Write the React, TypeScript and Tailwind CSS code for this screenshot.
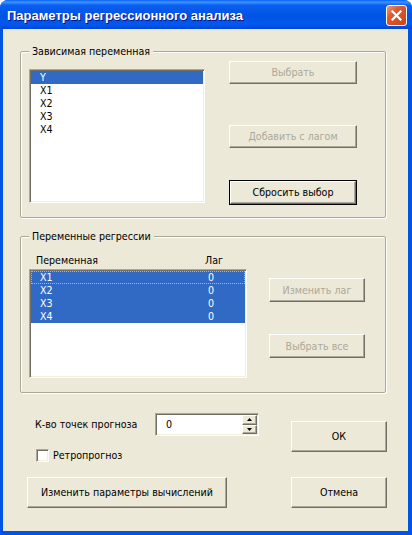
import clsx from "clsx";

const sunken =
  "border border-[#aca899] border-r-white border-b-white shadow-[inset_1px_1px_0_#716f64,inset_-1px_-1px_0_#f1efe2]";
const raised =
  "border border-white border-r-[#716f64] border-b-[#716f64] shadow-[inset_-1px_-1px_0_#aca899]";
const groupBox =
  "w-[366px] border border-[#aca899] rounded-[2px] shadow-[inset_1px_1px_0_#fff,1px_1px_0_#fff]";
const legend = "-mt-[7px] ml-[8px] w-fit px-[3px] bg-[#ece9d8] leading-[13px]";

type BtnProps = { label: string; disabled?: boolean; def?: boolean; className?: string };

const Btn = ({ label, disabled = false, def = false, className = "" }: BtnProps) => (
  <button type="button" className={clsx("flex leading-[13px]", def && "border border-black", className)}>
    <span className={clsx("flex h-full w-full items-center justify-center bg-[#ece9d8]", raised)}>
      <span className={disabled ? "text-[#aca899]" : "text-black"}>{label}</span>
    </span>
  </button>
);

const Arrow = ({ up }: { up?: boolean }) => (
  <svg width="5" height="3" viewBox="0 0 5 3">
    <path d={up ? "M0 3h5L2.5 0z" : "M0 0h5L2.5 3z"} fill="#000" />
  </svg>
);

const deps = ["Y", "X1", "X2", "X3", "X4"];
const regs = ["X1", "X2", "X3", "X4"];

export default function App() {
  return (
    <div className="h-[535px] w-[412px] bg-white">
      <div className="flex h-[535px] w-[412px] flex-col overflow-hidden rounded-t-[8px] bg-[#0054e3] text-[10.6px] text-black font-['DejaVu_Sans_Condensed','Liberation_Sans',sans-serif]">
        {/* title bar */}
        <div className="flex h-[29px] items-start justify-between bg-[linear-gradient(180deg,#0a5ff5_0%,#3d95ff_7%,#0a5ff0_18%,#0054e3_55%,#0058ee_85%,#0044d6_100%)] pl-[7px] pr-[5px]">
          <span className="mt-[8px] text-[13px] font-bold leading-[16px] text-white font-['Liberation_Sans',sans-serif] [text-shadow:1px_1px_0_#0f1089]">
            Параметры регрессионного анализа
          </span>
          <div className="mt-[5px] flex h-[21px] w-[21px] items-center justify-center rounded-[3px] border border-white bg-[linear-gradient(135deg,#ec9a7e_0%,#df5a30_35%,#c9431d_100%)]">
            <svg width="11" height="11" viewBox="0 0 11 11">
              <path d="M1.5 1.5l8 8M9.5 1.5l-8 8" stroke="#fff" strokeWidth="2.2" strokeLinecap="square" />
            </svg>
          </div>
        </div>

        {/* client area */}
        <div className="mb-[4px] ml-[3px] mr-[4px] flex flex-1 flex-col bg-[#ece9d8] pl-[17px] pt-[22px]">
          {/* dependent variable */}
          <div className={clsx(groupBox, "h-[167px]")}>
            <div className={legend}>Зависимая переменная</div>
            <div className="flex items-start">
              <div className={clsx("ml-[8px] mt-[11px] h-[134px] w-[176px] bg-white p-[1px]", sunken)}>
                {deps.map((d, i) => (
                  <div
                    key={d}
                    className={clsx(
                      "h-[13px] pl-[9px] leading-[13px]",
                      i === 0 ? "bg-[#316ac5] text-white" : ""
                    )}
                  >
                    {d}
                  </div>
                ))}
              </div>
              <div className="ml-[24px] mt-[3px] flex flex-col">
                <Btn label="Выбрать" disabled className="h-[23px] w-[128px]" />
                <Btn label="Добавить с лагом" disabled className="mt-[41px] h-[23px] w-[128px]" />
                <Btn label="Сбросить выбор" def className="mt-[32px] h-[25px] w-[128px]" />
              </div>
            </div>
          </div>

          {/* regression variables */}
          <div className={clsx(groupBox, "mt-[18px] h-[157px]")}>
            <div className={legend}>Переменные регрессии</div>
            <div className="flex items-start">
              <div className="ml-[8px] flex flex-col">
                <div className="mt-[11px] flex leading-[13px]">
                  <span className="w-[176px] pl-[7px]">Переменная</span>
                  <span>Лаг</span>
                </div>
                <div className={clsx("mt-[2px] h-[109px] w-[218px] bg-white p-[1px]", sunken)}>
                  {regs.map((r, i) => (
                    <div
                      key={r}
                      className={clsx(
                        "flex h-[13px] bg-[#316ac5] leading-[13px] text-white",
                        i === 0 && "outline-1 -outline-offset-1 outline-dotted outline-[#f0b030]"
                      )}
                    >
                      <span className="w-[177px] pl-[9px]">{r}</span>
                      <span>0</span>
                    </div>
                  ))}
                </div>
              </div>
              <div className="ml-[22px] mt-[35px] flex flex-col">
                <Btn label="Изменить лаг" disabled className="h-[24px] w-[96px]" />
                <Btn label="Выбрать все" disabled className="mt-[32px] h-[24px] w-[96px]" />
              </div>
            </div>
          </div>

          {/* bottom controls */}
          <div className="mt-[20px] flex items-start">
            <div className="ml-[7px] flex w-[264px] flex-col">
              <div className="flex h-[23px] items-center">
                <span className="w-[128px] pl-[8px] leading-[13px]">К-во точек прогноза</span>
                <div className={clsx("flex h-[23px] w-[104px] bg-white", sunken)}>
                  <span className="flex flex-1 items-center pl-[10px]">0</span>
                  <div className="my-[1px] mr-[1px] flex w-[15px] flex-col">
                    <div className={clsx("flex flex-1 items-center justify-center bg-[#ece9d8]", raised)}>
                      <Arrow up />
                    </div>
                    <div className={clsx("flex flex-1 items-center justify-center bg-[#ece9d8]", raised)}>
                      <Arrow />
                    </div>
                  </div>
                </div>
              </div>
              <div className="ml-[9px] mt-[13px] flex items-center">
                <span className={clsx("h-[13px] w-[13px] bg-white", sunken)} />
                <span className="ml-[4px] leading-[13px]">Ретропрогноз</span>
              </div>
              <Btn label="Изменить параметры вычислений" className="mt-[15px] h-[31px] w-[200px]" />
            </div>
            <div className="mt-[8px] flex flex-col">
              <Btn label="ОК" className="h-[31px] w-[96px]" />
              <Btn label="Отмена" className="mt-[25px] h-[31px] w-[96px]" />
            </div>
          </div>
        </div>
      </div>
    </div>
  );
}
